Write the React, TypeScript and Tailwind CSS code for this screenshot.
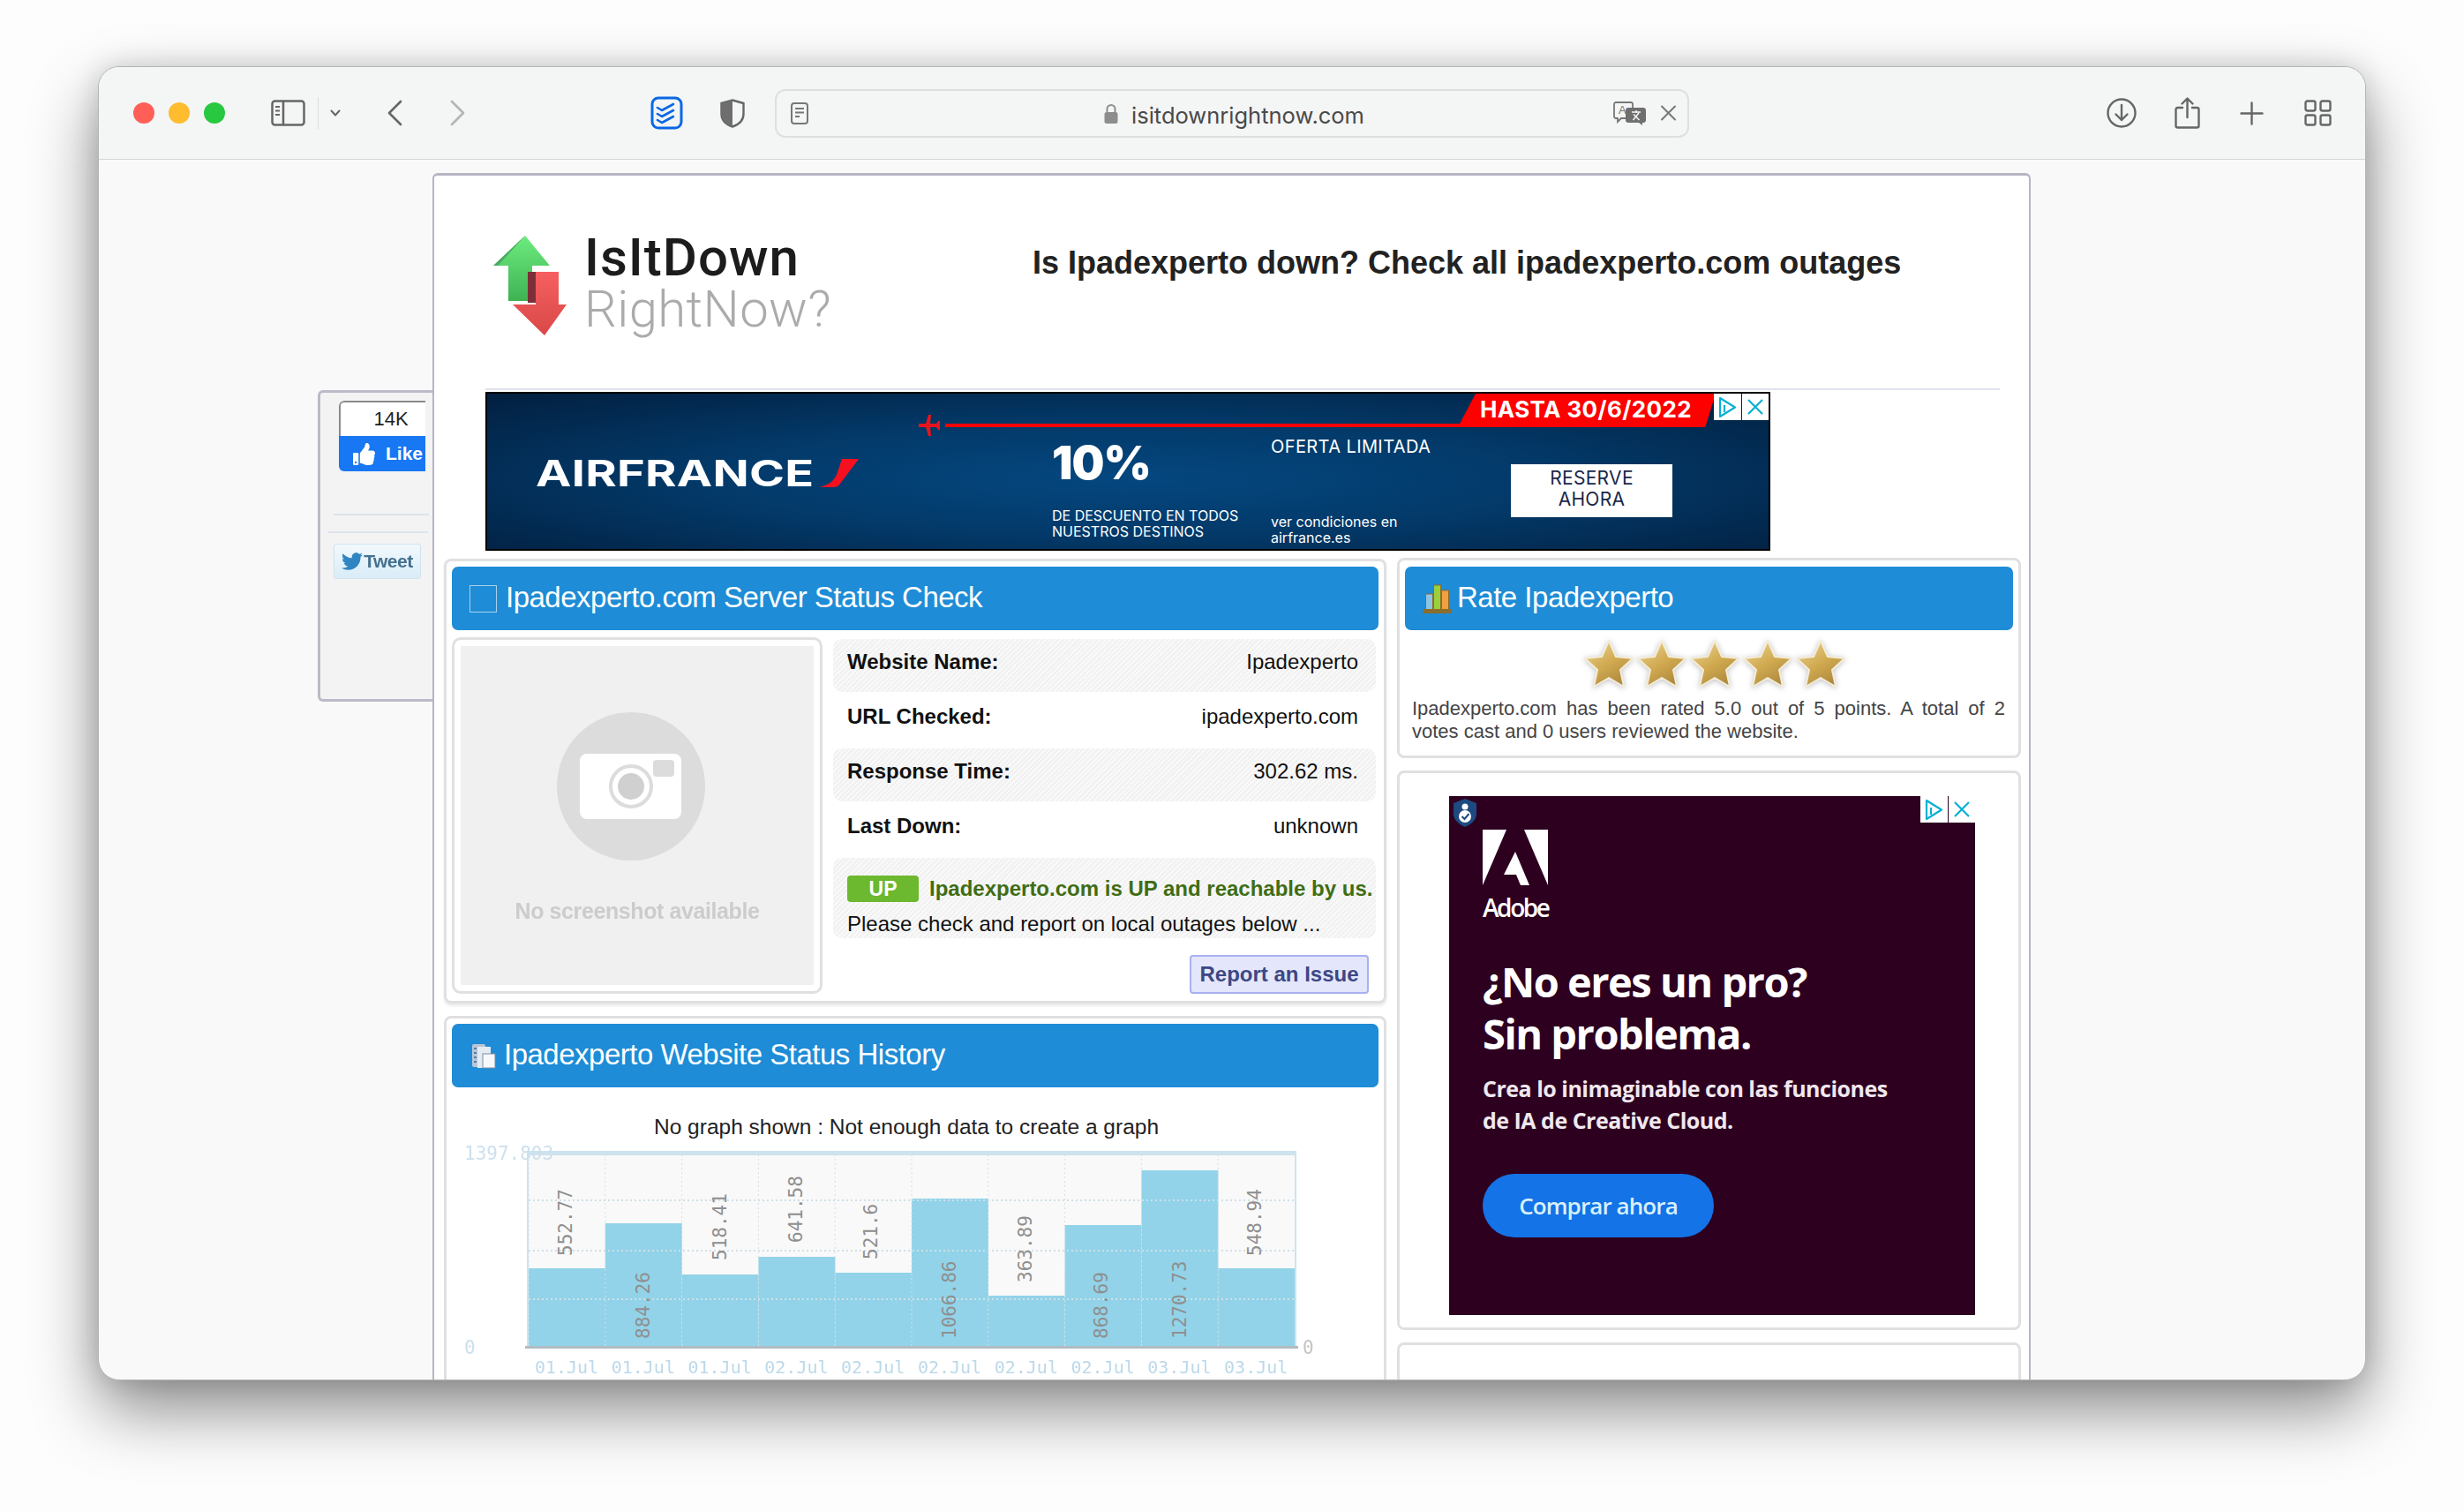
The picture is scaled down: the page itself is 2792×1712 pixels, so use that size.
import React from 'react';
import { FaThumbsUp, FaTwitter } from 'react-icons/fa';

const bars = [
  { top: 1437, label: '552.77', lx: 641, ly: 1423 },
  { top: 1386, label: '884.26', lx: 729, ly: 1517 },
  { top: 1444, label: '518.41', lx: 816, ly: 1428 },
  { top: 1424, label: '641.58', lx: 902, ly: 1408 },
  { top: 1442, label: '521.6', lx: 987, ly: 1427 },
  { top: 1358, label: '1066.86', lx: 1076, ly: 1517 },
  { top: 1468, label: '363.89', lx: 1162, ly: 1453 },
  { top: 1388, label: '868.69', lx: 1248, ly: 1517 },
  { top: 1326, label: '1270.73', lx: 1337, ly: 1517 },
  { top: 1437, label: '548.94', lx: 1422, ly: 1423 },
];
const dates = ['01.Jul', '01.Jul', '01.Jul', '02.Jul', '02.Jul', '02.Jul', '02.Jul', '02.Jul', '03.Jul', '03.Jul'];

const ToolbarIcons = {
  Sidebar: () => (
    <svg width="39" height="30" viewBox="0 0 39 30" fill="none" stroke="#666" strokeWidth="2.5">
      <rect x="1.5" y="1.5" width="36" height="27" rx="3" />
      <path d="M14 2v26" />
      <path d="M5 8h5M5 12.5h5M5 17h5" strokeWidth="2" />
    </svg>
  ),
  Chevron: ({ dir, color }: { dir: 'left' | 'right'; color: string }) => (
    <svg width="17" height="30" viewBox="0 0 17 30" fill="none" stroke={color} strokeWidth="2.6" strokeLinecap="round" strokeLinejoin="round">
      <path d={dir === 'left' ? 'M15 2 2 15l13 13' : 'M2 2l13 13L2 28'} />
    </svg>
  ),
  Checks: () => (
    <svg width="37" height="38" viewBox="0 0 37 38" fill="none" stroke="#0a68e6" strokeLinecap="round" strokeLinejoin="round">
      <rect x="2" y="2" width="33" height="34" rx="7" strokeWidth="3" />
      <path d="M8 13l5 3 13-7M8 20l5 3 13-7M8 27l5 3 13-7" strokeWidth="2.6" />
    </svg>
  ),
  Shield: () => (
    <svg width="28" height="33" viewBox="0 0 28 33">
      <path d="M14 1.5 26.5 5v12c0 7-5 12-12.5 14.5C6.500 29 1.500 24 1.500 17V5z" fill="none" stroke="#666" strokeWidth="2.400" />
      <path d="M14 1.500 1.500 5v12C1.500 24 6.500 29 14 31.500z" fill="#6e6e6e" />
    </svg>
  ),
  Reader: () => (
    <svg width="20" height="25" viewBox="0 0 20 25" fill="none" stroke="#777" strokeWidth="2">
      <rect x="1" y="1" width="18" height="23" rx="3" />
      <path d="M5 7h10M5 11.500h10M5 16h5" />
    </svg>
  ),
  Lock: () => (
    <svg width="16" height="23" viewBox="0 0 16 23">
      <path d="M3.500 11V6.500a4.500 4.500 0 0 1 9 0V11" fill="none" stroke="#8d8d8d" strokeWidth="2" />
      <rect x="0.500" y="10" width="15" height="13" rx="2.500" fill="#8d8d8d" />
    </svg>
  ),
  Translate: () => (
    <svg width="37" height="27" viewBox="0 0 37 27">
      <path d="M3 1h17a2 2 0 0 1 2 2v14a2 2 0 0 1-2 2H9l-4 4v-4H3a2 2 0 0 1-2-2V3a2 2 0 0 1 2-2z" fill="#f4f5f5" stroke="#777" strokeWidth="1.800" />
      <text x="6" y="14" fontSize="13" fill="#777" fontFamily="Liberation Sans, sans-serif">A</text>
      <path d="M17 7h17a3 3 0 0 1 3 3v11a3 3 0 0 1-3 3h-1v3l-4-3H17a3 3 0 0 1-3-3V10a3 3 0 0 1 3-3z" fill="#6f6f6f" />
      <path d="M21 12h10M26 10v3M22.500 21l6.500-8M23 14.500l6.500 6.500" stroke="#f4f5f5" strokeWidth="1.500" fill="none" />
    </svg>
  ),
  Close: () => (
    <svg width="19" height="18" viewBox="0 0 19 18" stroke="#777" strokeWidth="2" strokeLinecap="round">
      <path d="M2 1.500 17 16.500M17 1.500 2 16.500" />
    </svg>
  ),
  Download: () => (
    <svg width="36" height="34" viewBox="0 0 36 34" fill="none" stroke="#666" strokeWidth="2.400" strokeLinecap="round" strokeLinejoin="round">
      <circle cx="18" cy="17" r="15.500" />
      <path d="M18 8v17M11.500 18.500 18 25l6.500-6.500" />
    </svg>
  ),
  Share: () => (
    <svg width="29" height="36" viewBox="0 0 29 36" fill="none" stroke="#666" strokeWidth="2.400" strokeLinecap="round" strokeLinejoin="round">
      <path d="M9 12H3.500a2 2 0 0 0-2 2v18.500a2 2 0 0 0 2 2h22a2 2 0 0 0 2-2V14a2 2 0 0 0-2-2H20" />
      <path d="M14.500 23V2M8.500 7.500l6-6 6 6" />
    </svg>
  ),
  Plus: () => (
    <svg width="27" height="27" viewBox="0 0 27 27" stroke="#666" strokeWidth="2.400" strokeLinecap="round">
      <path d="M13.500 1.500v24M1.500 13.500h24" />
    </svg>
  ),
  Grid: () => (
    <svg width="31" height="30" viewBox="0 0 31 30" fill="none" stroke="#666" strokeWidth="2.400">
      <rect x="1.500" y="1.500" width="11" height="11" rx="2" />
      <rect x="18.500" y="1.500" width="11" height="11" rx="2" />
      <rect x="1.500" y="17.500" width="11" height="11" rx="2" />
      <rect x="18.500" y="17.500" width="11" height="11" rx="2" />
    </svg>
  ),
};

const Toolbar = () => (
  <div className="flex h-[105px] shrink-0 items-center border-b border-[#d6d6d6] bg-[#f4f5f5] pl-[39px]">
    <div className="flex gap-4">
      <span className="h-6 w-6 rounded-full bg-[#ff5f57]" />
      <span className="h-6 w-6 rounded-full bg-[#febc2e]" />
      <span className="h-6 w-6 rounded-full bg-[#28c840]" />
    </div>
    <div className="ml-[52px] flex"><ToolbarIcons.Sidebar /></div>
    <div className="ml-[14px] h-[36px] w-px bg-[#dddddd]" />
    <svg className="ml-[13px]" width="12" height="8" viewBox="0 0 12 8" fill="none" stroke="#666" strokeWidth="2" strokeLinecap="round" strokeLinejoin="round">
      <path d="M1.500 1.500 6 6.500l4.500-5" />
    </svg>
    <div className="ml-[53px] flex"><ToolbarIcons.Chevron dir="left" color="#666" /></div>
    <div className="ml-[54px] flex"><ToolbarIcons.Chevron dir="right" color="#b4b4b4" /></div>
    <div className="ml-[210px] flex"><ToolbarIcons.Checks /></div>
    <div className="ml-[42px] flex"><ToolbarIcons.Shield /></div>
    <div className="ml-[34px] flex h-[55px] w-[1036px] items-center rounded-[12px] border-2 border-[#dfdfdf] bg-[#f4f5f5] pl-4 pr-3">
      <ToolbarIcons.Reader />
      <div className="ml-[335px] flex"><ToolbarIcons.Lock /></div>
      <span className="ml-[15px] mt-[6px] font-['Inter',sans-serif] text-[25.5px] text-[#4a4a4a]">isitdownrightnow.com</span>
      <div className="ml-auto flex"><ToolbarIcons.Translate /></div>
      <div className="ml-4 flex"><ToolbarIcons.Close /></div>
    </div>
    <div className="ml-[472px] flex"><ToolbarIcons.Download /></div>
    <div className="ml-[42px] flex"><ToolbarIcons.Share /></div>
    <div className="ml-[45px] flex"><ToolbarIcons.Plus /></div>
    <div className="ml-[46px] flex"><ToolbarIcons.Grid /></div>
  </div>
);

const SideWidget = () => (
  <div className="mt-[261px] h-[353px] w-[130px] shrink-0 rounded-l-[6px] border-y-[3px] border-l-[3px] border-[#bdb9c8] bg-[#f3f3f3] pl-[21px] pt-[9px]">
    <div className="h-[80px] w-[98px] overflow-hidden rounded-l-[6px]">
      <div className="flex h-[40px] items-center justify-center rounded-tl-[6px] border-l-2 border-t-2 border-[#8a8a8a] bg-white pb-[2px] pl-[18px] text-[22px] text-[#222]">14K</div>
      <div className="flex h-[40px] items-center bg-[#1877f2] pl-[16px] text-white">
        <FaThumbsUp className="text-[25px]" />
        <span className="ml-[12px] whitespace-nowrap text-[21px] font-bold">Like</span>
      </div>
    </div>
    <div className="-ml-[6px] mt-[48px] h-[2px] w-[108px] bg-[#dde3ec]" />
    <div className="-ml-[12px] mt-[18px] h-[2px] w-[113px] bg-[#dde3ec]" />
    <div className="-ml-[6px] mt-[12px] flex h-[40px] w-[99px] items-center justify-center rounded-[3px] border border-[#cfe3ef] bg-gradient-to-b from-[#f2f9fd] to-[#d9ecf7] blur-[0.5px]">
      <FaTwitter className="text-[24px] text-[#2f85c2]" />
      <span className="ml-[1px] text-[21px] font-bold tracking-[-0.5px] text-[#44708f]">Tweet</span>
    </div>
  </div>
);

const LogoArrows = () => (
  <svg width="83" height="113" viewBox="559 267 83 113" className="shrink-0 blur-[0.4px]">
    <defs>
      <linearGradient id="logoGreen" x1="0" y1="0" x2="0" y2="1">
        <stop offset="0" stopColor="#6cec7e" />
        <stop offset="1" stopColor="#3fb254" />
      </linearGradient>
      <linearGradient id="logoRed" x1="0" y1="0" x2="0" y2="1">
        <stop offset="0" stopColor="#f65f5f" />
        <stop offset="1" stopColor="#d94848" />
      </linearGradient>
    </defs>
    <path d="M595 267 623 301H603V341H576V301H559Z" fill="url(#logoGreen)" />
    <path d="M595 267 559 301H564L595 267Z" fill="#4aa860" />
    <path d="M598 308H607V343H598Z" fill="#7c2f38" />
    <path d="M607 308H633V345H642L617 380 581 345H607Z" fill="url(#logoRed)" />
  </svg>
);

const AdChoices = () => (
  <div className="flex">
    <div className="flex h-[30px] w-[31px] items-center justify-center bg-white">
      <svg width="21" height="25" viewBox="0 0 21 25" fill="none" stroke="#08b0d4" strokeWidth="2.200" strokeLinejoin="round">
        <path d="M2 2v21L19 12.500Z" />
        <path d="M7 10v8" />
      </svg>
    </div>
    <div className="ml-px flex h-[30px] w-[30px] items-center justify-center bg-white">
      <svg width="20" height="20" viewBox="0 0 20 20" stroke="#08b0d4" strokeWidth="2.200">
        <path d="M2 2 18 18M18 2 2 18" />
      </svg>
    </div>
  </div>
);

const AirFranceAd = () => (
  <div className="relative ml-[58px] mt-[2px] flex h-[180px] w-[1456px] overflow-hidden border-2 border-black bg-[radial-gradient(ellipse_at_50%_55%,#04477f_0%,#033a6a_45%,#021f3f_100%)] font-['Inter',sans-serif] text-white">
    <div className="w-[640px] shrink-0 pl-[55px] pt-[68px]">
      <div className="flex items-center">
        <span className="origin-left scale-x-[1.32] text-[41px] font-bold leading-[44px] tracking-[0.2px]">AIRFRANCE</span>
        <svg className="ml-[82px]" width="45" height="32" viewBox="0 0 45 32">
          <path d="M26 0H45L24 28c-2 3-5 4-8 4H0C10 30 16 26 20 18Z" fill="#f5101f" />
        </svg>
      </div>
    </div>
    <div className="w-[248px] shrink-0 pt-[53px]">
      <div className="text-[52px] font-black leading-[52px] tracking-[-1px]">10%</div>
      <div className="mt-[24px] text-[16px] leading-[18px]">DE DESCUENTO EN TODOS<br />NUESTROS DESTINOS</div>
    </div>
    <div className="w-[272px] shrink-0 pt-[48px]">
      <div className="text-[20px] leading-[24px] tracking-[0.4px]">OFERTA LIMITADA</div>
      <div className="mt-[64px] text-[16px] leading-[18px]">ver condiciones en<br />airfrance.es</div>
    </div>
    <div className="pt-[80px]">
      <div className="flex h-[60px] w-[183px] flex-col items-center justify-center bg-white pb-[4px] text-[21px] leading-[24px] tracking-[0.3px] text-[#1a2748]">
        <span>RESERVE</span>
        <span>AHORA</span>
      </div>
    </div>
    {/* red route line and date tab sit over the creative */}
    <div className="absolute left-[519px] right-[76px] top-[34px] h-[4px] bg-[#f00]" />
    <svg className="absolute left-[487px] top-[24px]" width="26" height="24" viewBox="0 0 26 24" fill="#e8141c">
      <path d="M2 10h8L13 0h3l-1 10h7l2-3h2v10h-2l-2-3h-7l1 10h-3l-3-10H2z" />
    </svg>
    <div className="absolute right-[60px] top-0 flex h-[38px] w-[292px] items-center justify-center bg-[#f00] pb-[2px] pr-[2px] text-[26px] font-bold leading-none tracking-[0.4px] [clip-path:polygon(20px_0,100%_0,96%_100%,0_100%)]">
      HASTA 30/6/2022
    </div>
    <div className="absolute right-0 top-0"><AdChoices /></div>
  </div>
);

const SectionHeader = ({ icon, children, className }: { icon: React.ReactNode; children: React.ReactNode; className: string }) => (
  <div className={`flex h-[72px] items-center rounded-[7px] bg-[#1e8cd6] text-[33px] tracking-[-0.5px] text-white ${className}`}>
    {icon}
    <span className="mb-[3px]">{children}</span>
  </div>
);

const StatusRow = ({ label, value, striped, className }: { label: string; value: string; striped?: boolean; className: string }) => (
  <div className={`flex items-center justify-between rounded-[10px] pb-2 pl-4 pr-[20px] text-[24px] text-[#111] ${className} ${striped ? "bg-[repeating-linear-gradient(135deg,#f1f1f1_0,#f1f1f1_2px,#f9f9f9_2px,#f9f9f9_4px)]" : ''}`}>
    <span className="font-bold">{label}</span>
    <span>{value}</span>
  </div>
);

const NoScreenshot = () => (
  <div className="h-[404px] w-[420px] shrink-0 rounded-[10px] border-[3px] border-[#e0e0e0] bg-white p-[7px]">
    <div className="flex h-full flex-col items-center bg-[#f0f0f0] pt-[75px]">
      <svg width="168" height="168" viewBox="0 0 168 168" className="ml-[-14px] blur-[0.5px]">
        <circle cx="84" cy="84" r="84" fill="#dcdcdc" />
        <rect x="26" y="47" width="115" height="74" rx="8" fill="#fff" />
        <rect x="109" y="54" width="24" height="19" rx="4" fill="#dcdcdc" />
        <circle cx="84" cy="84" r="23" fill="#fff" stroke="#dcdcdc" strokeWidth="4" />
        <circle cx="84" cy="84" r="15" fill="#d0d0d0" />
      </svg>
      <div className="mt-[39px] text-[25px] font-bold tracking-[-0.4px] text-[#cccccc] blur-[0.5px]">No screenshot available</div>
    </div>
  </div>
);

const StatusCard = () => (
  <div className="rounded-[8px] border-[3px] border-[#e0e0e0] bg-white px-[6px] pb-[8px] pt-[6px] shadow-[0_3px_3px_rgba(0,0,0,0.08)]">
    <SectionHeader className="pl-[20px]" icon={<span className="mr-[10px] h-[31px] w-[31px] border border-[#a9d2ec]" />}>
      Ipadexperto.com Server Status Check
    </SectionHeader>
    <div className="mt-2 flex">
      <NoScreenshot />
      <div className="ml-3 flex w-[615px] flex-col pt-[2px]">
        <StatusRow striped className="h-[60px]" label="Website Name:" value="Ipadexperto" />
        <StatusRow className="h-[64px]" label="URL Checked:" value="ipadexperto.com" />
        <StatusRow striped className="h-[60px]" label="Response Time:" value="302.62 ms." />
        <StatusRow className="h-[64px]" label="Last Down:" value="unknown" />
        <div className="h-[91px] rounded-[10px] bg-[repeating-linear-gradient(135deg,#f1f1f1_0,#f1f1f1_2px,#f9f9f9_2px,#f9f9f9_4px)] pl-4 pt-[17px] text-[24px]">
          <div className="flex items-center">
            <span className="flex h-[30px] w-[81px] items-center justify-center rounded-[4px] bg-[#6cb82e] text-[23px] font-bold text-white">UP</span>
            <span className="ml-[12px] whitespace-nowrap font-bold text-[#3f6d14]">Ipadexperto.com is UP and reachable by us.</span>
          </div>
          <div className="mt-[8px] whitespace-nowrap leading-[28px] text-[#111]">Please check and report on local outages below ...</div>
        </div>
        <button className="mr-[8px] mt-[19px] h-[44px] w-[203px] self-end rounded-[4px] border-2 border-[#a9b0f0] bg-[#e4e7fb] text-[24px] font-bold text-[#3d4785]">
          Report an Issue
        </button>
      </div>
    </div>
  </div>
);

const HistoryChart = () => (
  <svg width="1050" height="280" viewBox="512 1291 1050 280" className="blur-[0.7px]">
    <rect x="599" y="1306" width="868" height="221" fill="#f9f9f9" />
    {bars.map((bar, i) => (
      <rect key={i} x={599 + i * 86.8} y={bar.top} width="87" height={1527 - bar.top} fill="#92d3e9" />
    ))}
    {[1360, 1417, 1472].map((y) => (
      <path key={y} d={`M599 ${y}H1467`} stroke="#cfe0e8" strokeWidth="2" strokeDasharray="2 3" />
    ))}
    {bars.map((_, i) => (
      <path key={i} d={`M${599 + i * 86.8} 1308V1527`} stroke="#d5dfe4" strokeWidth="1" strokeDasharray="2 3" />
    ))}
    <rect x="598" y="1304" width="870" height="5" fill="#cde3ee" />
    <rect x="597" y="1304" width="2" height="222" fill="#cde3ee" />
    <rect x="1467" y="1304" width="2" height="222" fill="#cde3ee" />
    <rect x="595" y="1525" width="876" height="3" fill="#b0bcc2" />
    {bars.map((bar) => (
      <text key={bar.label} transform={`translate(${bar.lx + 7} ${bar.ly}) rotate(-90)`} fontSize="21" fontFamily="DejaVu Sans Mono, monospace" fill="#8f8f8f">
        {bar.label}
      </text>
    ))}
    {dates.map((d, i) => (
      <text key={i} x={642 + i * 86.8} y="1556" textAnchor="middle" fontSize="20" fontFamily="DejaVu Sans Mono, monospace" fill="#bcd9ea">
        {d}
      </text>
    ))}
    <text x="526" y="1314" fontSize="21" fontFamily="DejaVu Sans Mono, monospace" fill="#cde0ee">1397.803</text>
    <text x="526" y="1534" fontSize="21" fontFamily="DejaVu Sans Mono, monospace" fill="#cde0ee">0</text>
    <text x="1476" y="1534" fontSize="21" fontFamily="DejaVu Sans Mono, monospace" fill="#c4c4c4">0</text>
  </svg>
);

const HistoryCard = () => (
  <div className="mt-[14px] h-[500px] rounded-[8px] border-[3px] border-[#e0e0e0] bg-white px-[6px] pt-[6px]">
    <SectionHeader
      className="pl-[21px]"
      icon={
        <svg className="mr-[9px]" width="29" height="29" viewBox="0 0 29 29">
          <rect x="2" y="1" width="15" height="26" rx="2" fill="#b9c6d6" />
          <rect x="8" y="4" width="15" height="24" fill="#e4ebf3" />
          <rect x="14" y="12" width="14" height="16" fill="#f7f9fb" stroke="#7d8ea3" />
          <path d="M4 6h3M4 11h3M4 16h3M4 21h3" stroke="#4f7fb0" strokeWidth="2" />
        </svg>
      }
    >
      Ipadexperto Website Status History
    </SectionHeader>
    <div className="pr-5 pt-[31px] text-center text-[24.500px] leading-[28px] text-[#222]">No graph shown : Not enough data to create a graph</div>
    <HistoryChart />
  </div>
);

const Star = () => (
  <svg width="60" height="58" viewBox="0 0 60 58" className="drop-shadow-[0_1px_3px_rgba(0,0,0,0.25)]">
    <path d="M30 3 38 21 57 23 43 36 47 55 30 45 13 55 17 36 3 23 22 21Z" fill="url(#starGold)" stroke="#f4ecd8" strokeWidth="2" strokeLinejoin="round" />
  </svg>
);

const RateCard = () => (
  <div className="-mt-px h-[227px] rounded-[8px] border-[3px] border-[#e0e0e0] bg-white px-[6px] pt-[7px]">
    <SectionHeader
      className="pl-[20px]"
      icon={
        <svg className="mr-[6px]" width="33" height="33" viewBox="0 0 32 33">
          <rect x="3" y="11" width="8" height="18" fill="#8cc4e8" stroke="#8a6d2c" />
          <rect x="12" y="1" width="8" height="28" fill="#9ccf3c" stroke="#8a6d2c" />
          <rect x="21" y="7" width="8" height="22" fill="#f0a040" stroke="#8a6d2c" />
          <rect x="0" y="28" width="32" height="5" fill="#8a6d2c" />
        </svg>
      }
    >
      Rate Ipadexperto
    </SectionHeader>
    <svg width="0" height="0" className="absolute">
      <defs>
        <linearGradient id="starGold" x1="0.2" y1="0" x2="0.8" y2="1">
          <stop offset="0" stopColor="#e8cf8e" />
          <stop offset="0.5" stopColor="#d0a94f" />
          <stop offset="1" stopColor="#a8843c" />
        </linearGradient>
      </defs>
    </svg>
    <div className="ml-[12px] mt-[9px] flex justify-center">
      {[0, 1, 2, 3, 4].map((i) => <Star key={i} />)}
    </div>
    <div className="mt-[9px] pl-[8px] pr-[9px] text-[22px] leading-[26px] text-[#444]">
      <p className="whitespace-nowrap text-justify [text-align-last:justify]">Ipadexperto.com has been rated 5.0 out of 5 points. A total of 2</p>
      <p>votes cast and 0 users reviewed the website.</p>
    </div>
  </div>
);

const AdobeAd = () => (
  <div className="mt-[14px] rounded-[8px] border-[3px] border-[#e0e0e0] bg-white pb-[14px] pl-[56px] pt-[26px]">
    <div className="relative h-[588px] w-[596px] bg-[#2d0020] pl-[38px] pt-[38px] font-['Open_Sans',sans-serif] text-white">
      <svg width="74" height="63" viewBox="1680 940 74 63">
        <path d="M1680 940H1707L1680 1003ZM1727 940H1754V1003ZM1717 965 1733 1003H1723L1718 991H1704Z" fill="#fff" />
      </svg>
      <div className="mt-[8px] h-[34px] text-[28px] font-semibold leading-[34px] tracking-[-2.400px]">Adobe</div>
      <div className="mt-[38px] text-[47px] font-bold leading-[59px] tracking-[-1.500px]">¿No eres un pro?<br />Sin problema.</div>
      <div className="mt-[14px] text-[25px] font-bold leading-[36px] tracking-[-0.5px] text-[#f0e8ee]">Crea lo inimaginable con las funciones<br />de IA de Creative Cloud.</div>
      <div className="mt-[43px] flex h-[72px] w-[262px] items-center justify-center rounded-full bg-[#1473e6] text-[26px] font-semibold tracking-[-0.9px] text-[#d8f0fb]">Comprar ahora</div>
      <svg className="absolute left-[4px] top-[3px]" width="28" height="32" viewBox="0 0 28 32">
        <path d="M14 0 27 5v12c0 7-6 12-13 15C7 29 1 24 1 17V5z" fill="#1d4a80" />
        <circle cx="14" cy="9" r="3.500" fill="#fff" />
        <circle cx="14" cy="20" r="7" fill="#fff" />
        <path d="M10.500 20l3 3 5-6" fill="none" stroke="#1d4a80" strokeWidth="2" />
      </svg>
      <div className="absolute right-0 top-0"><AdChoices /></div>
    </div>
  </div>
);

const App = () => (
  <div className="h-[1712px] w-[2792px] overflow-hidden bg-[#fdfdfd] pl-[111px] pt-[75px] font-['Liberation_Sans',sans-serif]">
    <div className="flex h-[1489px] w-[2570px] flex-col overflow-hidden rounded-[24px] border border-[#b4b4b4] bg-[#f9f9f9] shadow-[0_34px_76px_rgba(0,0,0,0.45),0_0_30px_rgba(0,0,0,0.14)]">
      <Toolbar />
      <div className="flex pl-[248px]">
        <SideWidget />
        <div className="mt-[15px] h-[1600px] w-[1811px] shrink-0 rounded-t-[6px] border-x-2 border-t-[3px] border-[#b8b4c4] bg-white">
          <div className="flex h-[241px]">
            <div className="flex w-[678px] shrink-0 pl-[67px]">
              <div className="mt-[68px] flex"><LogoArrows /></div>
              <div className="ml-[20px] mt-[63px] font-['Roboto',sans-serif] text-[58px] leading-[59px]">
                <div className="text-[60px] font-medium tracking-[1px] text-[#1c1c1c]">IsItDown</div>
                <div className="font-light tracking-[0.4px] text-[#ababab]">RightNow?</div>
              </div>
            </div>
            <h1 className="mt-[81px] whitespace-nowrap text-[36px] font-bold leading-[36px] text-[#222]">Is Ipadexperto down? Check all ipadexperto.com outages</h1>
          </div>
          <div className="ml-[58px] h-[2px] w-[1716px] bg-[#dde3ec]" />
          <AirFranceAd />
          <div className="mt-[9px] flex items-start pl-[11px]">
            <div className="w-[1068px] shrink-0">
              <StatusCard />
              <HistoryCard />
            </div>
            <div className="ml-[12px] w-[707px] shrink-0">
              <RateCard />
              <AdobeAd />
              <div className="mt-[14px] h-[200px] rounded-[8px] border-[3px] border-[#e0e0e0] bg-white" />
            </div>
          </div>
        </div>
      </div>
    </div>
  </div>
);

export default App;
